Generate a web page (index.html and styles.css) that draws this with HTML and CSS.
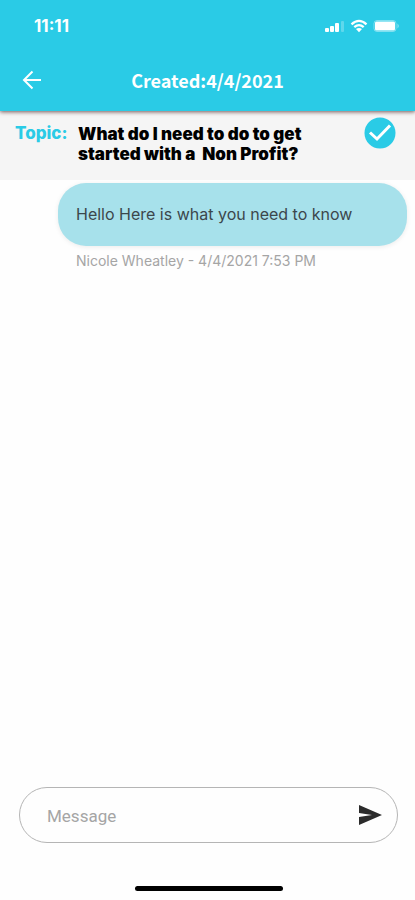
FILE: index.html
```html
<!DOCTYPE html>
<html lang="en">
<head>
<meta charset="utf-8">
<meta name="viewport" content="width=device-width, initial-scale=1">
<title>Topic conversation</title>
<link rel="stylesheet" href="styles.css">
</head>
<body>
<div class="app">
  <header class="header">
    <div class="status">
      <time class="clock">11:11</time>
      <div class="indicators">
        <svg width="20" height="14" viewBox="0 0 20 14" fill="#fff" aria-hidden="true">
          <rect x="0" y="9" width="4" height="4" rx="1"/>
          <rect x="5" y="7" width="4" height="6" rx="1"/>
          <rect x="10" y="4" width="4" height="9" rx="1"/>
          <rect x="16" y="2" width="3" height="11" rx="1" opacity=".25"/>
        </svg>
        <svg width="18" height="14" viewBox="0 0 18 14" aria-hidden="true">
          <path d="M1.5 5.3Q9-1.5 16.500 5.300M4.300 8.200Q9 4.100 13.700 8.200" fill="none" stroke="#fff" stroke-width="2.300"/>
          <path d="M6 10Q9 7.800 12 10L9 13.200Z" fill="#fff"/>
        </svg>
        <svg width="27" height="14" viewBox="0 0 27 14" aria-hidden="true">
          <rect x="1" y="1.500" width="22" height="11" rx="3" fill="none" stroke="#fff" opacity=".4"/>
          <rect x="2" y="2.500" width="20" height="9" rx="1.500" fill="#fff"/>
          <path d="M24.500 4.500Q27 7 24.500 9.500Z" fill="#fff" opacity=".5"/>
        </svg>
      </div>
    </div>
    <div class="bar">
      <button class="icon-button" type="button" aria-label="Back">
        <svg width="20" height="20" viewBox="0 0 20 20" fill="none" stroke="#fff" stroke-width="2" aria-hidden="true">
          <path d="M19 10H2.500M10.500 1.500L2 10L10.500 18.500"/>
        </svg>
      </button>
      <h1 class="title">Created:4/4/2021</h1>
    </div>
  </header>
  <section class="topic">
    <span class="topic-label">Topic:</span>
    <h2 class="topic-text">What do I need to do to get started with a&nbsp; Non Profit?</h2>
    <button class="icon-button" type="button" aria-label="Mark resolved">
      <svg width="32" height="32" viewBox="0 0 32 32" aria-hidden="true">
        <circle cx="16" cy="16" r="15.500" fill="#2acbe6"/>
        <path d="M6 15.500L13 22L26 8.500" fill="none" stroke="#fff" stroke-width="3"/>
      </svg>
    </button>
  </section>
  <main class="messages">
    <article class="message">
      <p class="bubble">Hello Here is what you need to know</p>
      <p class="meta">Nicole Wheatley - 4/4/2021 7:53 PM</p>
    </article>
  </main>
  <footer class="footer">
    <form class="composer">
      <input class="field" type="text" placeholder="Message" aria-label="Message">
      <button class="icon-button" type="button" aria-label="Send">
        <svg width="24" height="20" viewBox="0 0 24 20" fill="#2b2b2b" aria-hidden="true">
          <path d="M1 0L24 10L1 20V12L14 10L1 8Z"/>
        </svg>
      </button>
    </form>
    <div class="home"></div>
  </footer>
</div>
</body>
</html>
```

FILE: styles.css
```css
* { box-sizing: border-box; }
body {
  margin: 0;
  background: #fefefe;
  font-family: Inter, "Liberation Sans", sans-serif;
}
h1, h2, p { margin: 0; }
.app {
  min-height: 100vh;
  display: flex;
  flex-direction: column;
}
.header {
  position: relative;
  z-index: 1;
  background: #2acbe6;
  color: #fff;
  box-shadow: 0 1px 4px rgba(60, 20, 20, .7);
}
.status {
  height: 52px;
  padding: 0 15px 0 34px;
  display: flex;
  align-items: center;
  justify-content: space-between;
}
.clock {
  font-size: 17px;
  line-height: 20px;
  font-weight: 700;
}
.indicators {
  display: flex;
  align-items: center;
  gap: 5px;
}
.bar {
  height: 59px;
  padding: 0 22px 3px;
  display: grid;
  grid-template-columns: 20px 1fr 20px;
  align-items: center;
}
.title {
  text-align: center;
  font: 700 18px/28px "Noto Sans CJK JP", sans-serif;
}
.icon-button {
  padding: 0;
  border: 0;
  background: none;
  display: flex;
}
.topic {
  min-height: 69px;
  padding: 6px 19px 0 15px;
  display: flex;
  align-items: flex-start;
  background: #f5f5f5;
}
.topic-label {
  width: 63px;
  padding-top: 6px;
  flex: none;
  color: #2acbe6;
  font-size: 17px;
  line-height: 20px;
  font-weight: 800;
}
.topic-text {
  flex: 1;
  padding: 7px 32px 0 0;
  color: #000;
  font-size: 17px;
  line-height: 20px;
  font-weight: 900;
}
.messages {
  flex: 1;
  padding: 3px 8px 0 58px;
}
.bubble {
  padding: 21px 18px;
  border-radius: 28px;
  background: #a7e1eb;
  box-shadow: 0 1px 5px rgba(0, 0, 0, .08);
  color: #3c474c;
  font-size: 16px;
  line-height: 21px;
}
.meta {
  padding: 6px 18px 0;
  color: #a5a5a5;
  font-size: 14px;
  line-height: 18px;
}
.footer {
  padding: 0 17px 9px 19px;
}
.composer {
  height: 56px;
  padding: 0 15px 0 27px;
  display: flex;
  align-items: center;
  border: 1px solid #b5b5b5;
  border-radius: 28px;
}
.field {
  flex: 1;
  min-width: 0;
  padding: 2px 0 0;
  border: 0;
  outline: 0;
  background: none;
  color: #2b2b2b;
  font: 17px/20px Roboto, sans-serif;
}
.field::placeholder { color: #a5a5a5; }
.home {
  width: 148px;
  height: 5px;
  margin: 43px auto 0;
  border-radius: 3px;
  background: #000;
}
```
